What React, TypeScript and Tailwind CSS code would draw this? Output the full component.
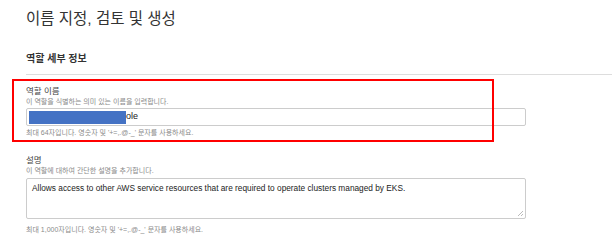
const font = "font-['Liberation_Sans','Noto_Sans_CJK_KR',sans-serif]";

export default function App() {
  return (
    <div className={`relative h-[242px] w-[612px] overflow-hidden bg-white ${font}`}>
      <div className="pl-[26px] pt-[7px]">
        <h1 className="text-[15.5px] leading-[24px] text-[#333]">이름 지정, 검토 및 생성</h1>
        <h2 className="mt-[21px] text-[10px] font-bold leading-[14px] text-[#333]">역할 세부 정보</h2>
        <div className="mt-[8px] h-px bg-[#ddd]" />

        <div className="mt-[10px] w-[500px]">
          <div className="text-[8.5px] leading-[12px] text-[#444]">역할 이름</div>
          <div className="text-[7px] leading-[10px] text-[#8a8a8a]">이 역할을 식별하는 의미 있는 이름을 입력합니다.</div>
          <div className="mt-[1px] flex h-[18px] items-center rounded-[2px] border border-[#ccc] pl-[2px]">
            <span className="h-[13px] w-[97px] bg-[#4472c4]" />
            <span className="text-[9px] text-[#222]">ole</span>
          </div>
          <div className="mt-[2px] text-[7px] leading-[10px] text-[#8a8a8a]">최대 64자입니다. 영숫자 및 '+=,.@-_' 문자를 사용하세요.</div>
        </div>

        <div className="mt-[16px] w-[500px]">
          <div className="text-[8.5px] leading-[12px] text-[#444]">설명</div>
          <div className="text-[7px] leading-[10px] text-[#8a8a8a]">이 역할에 대하여 간단한 설명을 추가합니다.</div>
          <div className="relative mt-[2px] h-[41px] rounded-[2px] border border-[#ccc] px-[5px] pt-[3px] text-[8.3px] leading-[12px] text-[#222]">
            Allows access to other AWS service resources that are required to operate clusters managed by EKS.
            <svg className="absolute bottom-[2px] right-[2px]" width="6" height="6" viewBox="0 0 6 6">
              <path d="M1 6 L6 1 M4 6 L6 4" stroke="#aaa" strokeWidth="0.8" />
            </svg>
          </div>
          <div className="mt-[6px] text-[7px] leading-[10px] text-[#8a8a8a]">최대 1,000자입니다. 영숫자 및 '+=,.@-_' 문자를 사용하세요.</div>
        </div>
      </div>

      <div className="absolute left-[12px] top-[79px] h-[63px] w-[482px] border-2 border-[#ff0000]" />
    </div>
  );
}
